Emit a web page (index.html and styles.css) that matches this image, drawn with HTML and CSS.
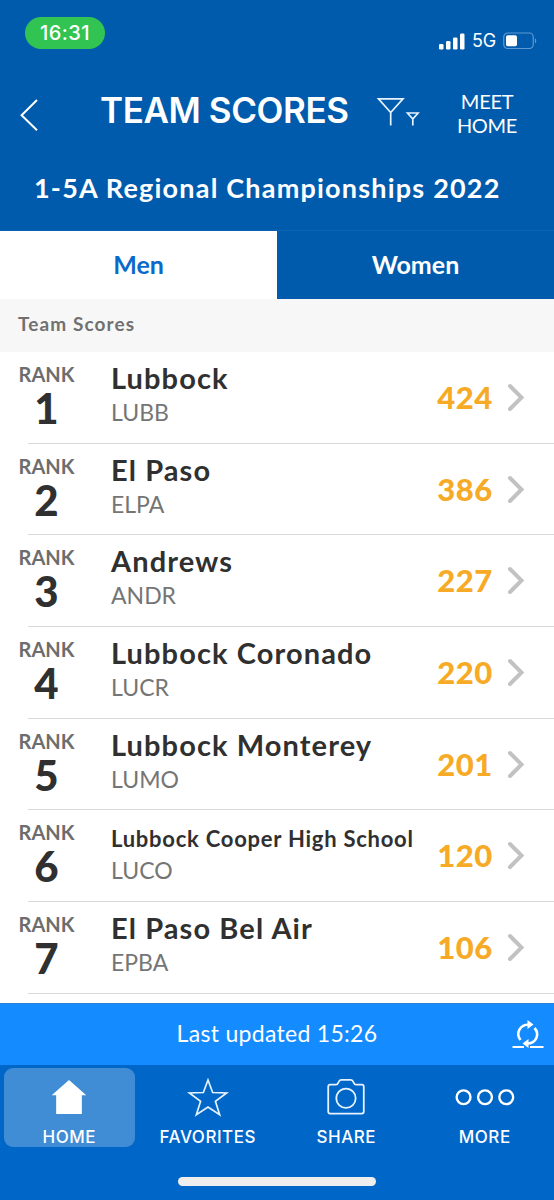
FILE: index.html
```
<!DOCTYPE html>
<html lang="en">
<head>
    <meta charset="UTF-8">
    <meta name="viewport" content="width=device-width, initial-scale=1.0">
    <title>Team Scores</title>
    <link rel="stylesheet" href="styles.css">
</head>
<body>
    <div class="app">
        <header class="header">
            <div class="status-bar">
                <span class="clock">16:31</span>
                <div class="status-icons">
                    <svg class="signal" width="26" height="17" viewBox="0 0 26 17" fill="#fff">
                        <rect x="0" y="11" width="4.5" height="5.5" rx="1.2"/>
                        <rect x="7" y="8" width="4.5" height="8.5" rx="1.2"/>
                        <rect x="14" y="4.5" width="4.5" height="12" rx="1.2"/>
                        <rect x="21" y="0.5" width="4.5" height="16" rx="1.2"/>
                    </svg>
                    <span class="network">5G</span>
                    <svg class="battery" width="35" height="18" viewBox="0 0 35 18">
                        <rect x="0.75" y="1" width="29.5" height="15.5" rx="4" fill="none" stroke="#5f9ad2" stroke-width="1.2"/>
                        <rect x="3" y="3.2" width="11" height="11" rx="1.8" fill="#fff"/>
                        <path d="M32 6.2c1.6.5 1.6 4.6 0 5.1z" fill="#5f9ad2"/>
                    </svg>
                </div>
            </div>
            <div class="title-bar">
                <a class="back" href="#" aria-label="Back">
                    <svg width="20" height="34" viewBox="0 0 20 34" fill="none" stroke="#fff" stroke-width="2">
                        <path d="M18 2L2.600 17.200l15.400 15"/>
                    </svg>
                </a>
                <h1>TEAM SCORES</h1>
                <svg class="filter" width="44" height="30" viewBox="0 0 44 30" fill="none" stroke="#e6f3ff" stroke-width="1.7">
                    <path d="M2.500 1.800h24.500L14.700 15.500zM14.700 15v13.500"/>
                    <path d="M31.500 16h10.500l-5.200 6zM36.800 21.500v7"/>
                </svg>
                <a class="meet-home" href="#">MEET<br>HOME</a>
            </div>
            <h2>1-5A Regional Championships 2022</h2>
        </header>

        <div class="tabs">
            <a class="tab active" href="#">Men</a>
            <a class="tab" href="#">Women</a>
        </div>
        <div class="section-title"><span>Team Scores</span></div>

        <ul class="teams">
            <li class="team">
                <div class="rank"><span>RANK</span><b>1</b></div>
                <div class="name"><h3>Lubbock</h3><p>LUBB</p></div>
                <div class="score">424</div>
                <svg class="chevron" viewBox="0 0 18 30"><path d="M3 3l11.500 11.500L3 26"/></svg>
            </li>
            <li class="team">
                <div class="rank"><span>RANK</span><b>2</b></div>
                <div class="name"><h3>El Paso</h3><p>ELPA</p></div>
                <div class="score">386</div>
                <svg class="chevron" viewBox="0 0 18 30"><path d="M3 3l11.500 11.500L3 26"/></svg>
            </li>
            <li class="team">
                <div class="rank"><span>RANK</span><b>3</b></div>
                <div class="name"><h3>Andrews</h3><p>ANDR</p></div>
                <div class="score">227</div>
                <svg class="chevron" viewBox="0 0 18 30"><path d="M3 3l11.500 11.500L3 26"/></svg>
            </li>
            <li class="team">
                <div class="rank"><span>RANK</span><b>4</b></div>
                <div class="name"><h3>Lubbock Coronado</h3><p>LUCR</p></div>
                <div class="score">220</div>
                <svg class="chevron" viewBox="0 0 18 30"><path d="M3 3l11.500 11.500L3 26"/></svg>
            </li>
            <li class="team">
                <div class="rank"><span>RANK</span><b>5</b></div>
                <div class="name"><h3>Lubbock Monterey</h3><p>LUMO</p></div>
                <div class="score">201</div>
                <svg class="chevron" viewBox="0 0 18 30"><path d="M3 3l11.500 11.500L3 26"/></svg>
            </li>
            <li class="team">
                <div class="rank"><span>RANK</span><b>6</b></div>
                <div class="name"><h3 class="long">Lubbock Cooper High School</h3><p>LUCO</p></div>
                <div class="score">120</div>
                <svg class="chevron" viewBox="0 0 18 30"><path d="M3 3l11.500 11.500L3 26"/></svg>
            </li>
            <li class="team">
                <div class="rank"><span>RANK</span><b>7</b></div>
                <div class="name"><h3>El Paso Bel Air</h3><p>EPBA</p></div>
                <div class="score">106</div>
                <svg class="chevron" viewBox="0 0 18 30"><path d="M3 3l11.500 11.500L3 26"/></svg>
            </li>
        </ul>

        <div class="updated">
            <span>Last updated 15:26</span>
            <svg class="refresh" width="32" height="30" viewBox="0 0 32 30" fill="none" stroke="#fff" stroke-width="2.6">
                <path d="M8.500 20C3.500 13.500 7.500 4.500 17 4.500"/>
                <path d="M22.500 8C28 14 24.500 23.500 15 23.500"/>
                <path d="M15.500 0l6 4.500-6 4.500zM16.500 19l-6 4.500 6 4.500z" fill="#fff" stroke="none"/>
                <path d="M.5 27H12M18 27h13.500" stroke-width="2"/>
            </svg>
        </div>

        <nav class="nav">
            <a class="nav-item current" href="#">
                <svg width="44" height="42" viewBox="0 0 44 42"><path d="M22 2L39.500 17.500H35V36.500H9V17.500H4.500z" fill="#fff"/></svg>
                <span>HOME</span>
            </a>
            <a class="nav-item" href="#">
                <svg width="44" height="42" viewBox="0 0 44 42" fill="none" stroke="#e6f3ff" stroke-width="1.7"><path d="M22 2L26.700 14.700 40.800 15.200 29.500 23.500 33.800 37.200 22 29.300 10.200 37.200 14.500 23.500 3.200 15.200 17.300 14.700z"/></svg>
                <span>FAVORITES</span>
            </a>
            <a class="nav-item" href="#">
                <svg width="44" height="42" viewBox="0 0 44 42" fill="none" stroke="#e6f3ff" stroke-width="1.8">
                    <path d="M6 6.800H12C14.500 6.800 14 2 17 2H27C30 2 29.500 6.800 32 6.800H38Q40 6.800 40 8.800V34Q40 36 38 36H6Q4 36 4 34V8.800Q4 6.800 6 6.800z"/>
                    <circle cx="22" cy="20.5" r="9.8"/>
                </svg>
                <span>SHARE</span>
            </a>
            <a class="nav-item" href="#">
                <svg width="62" height="42" viewBox="0 0 62 42" fill="none" stroke="#fff" stroke-width="2.4">
                    <circle cx="9.3" cy="19.5" r="7"/>
                    <circle cx="31" cy="19.5" r="7"/>
                    <circle cx="52.5" cy="19.5" r="7"/>
                </svg>
                <span>MORE</span>
            </a>
        </nav>
        <div class="home-indicator"></div>
    </div>
</body>
</html>
```
FILE: styles.css
```
* {
    box-sizing: border-box;
}
body {
    margin: 0;
    font-family: Lato, 'Open Sans', sans-serif;
    color: #303030;
    background-color: #fff;
}
h1, h2, h3, p, ul {
    margin: 0;
    padding: 0;
}
a {
    color: inherit;
    text-decoration: none;
}
svg {
    display: block;
}
.app {
    display: flex;
    flex-direction: column;
    width: 554px;
    height: 1200px;
    overflow: hidden;
    background-color: #0066c8;
}
.header {
    height: 230px;
    color: #fff;
    background-color: #005bad;
}
.status-bar {
    display: flex;
    justify-content: space-between;
    height: 80px;
    padding: 17px 16px 0 25px;
}
.clock {
    width: 80px;
    height: 32px;
    border-radius: 16px;
    background-color: #32c453;
    font: 500 20px/32px Inter, sans-serif;
    letter-spacing: 0.4px;
    text-align: center;
}
.status-icons {
    display: flex;
    align-items: center;
    height: 48px;
}
.signal {
    margin-right: 7px;
}
.network {
    width: 31px;
    font: 400 18px/24px Inter, sans-serif;
    letter-spacing: -0.3px;
}
.title-bar {
    display: flex;
    align-items: flex-start;
    height: 85px;
}
.back {
    width: 80px;
    padding: 18px 0 0 19px;
}
h1 {
    width: 269px;
    margin-left: 20px;
    padding-top: 8px;
    font: 600 35px/44px Inter, sans-serif;
    letter-spacing: -0.4px;
    white-space: nowrap;
}
.filter {
    margin-top: 17px;
    margin-left: 7px;
}
.meet-home {
    width: 80px;
    margin-left: 27px;
    padding-top: 9px;
    font-size: 20px;
    letter-spacing: -0.3px;
    line-height: 24px;
    text-align: center;
}
h2 {
    padding-left: 34px;
    font-size: 27px;
    font-weight: 700;
    letter-spacing: 1.2px;
    line-height: 46px;
    white-space: nowrap;
}
.tabs {
    display: flex;
    height: 69px;
    border-top: 1px solid #0a63b4;
    background-color: #005bad;
}
.tab {
    flex: 1;
    color: #fff;
    font-size: 25px;
    font-weight: 700;
    line-height: 66px;
    text-align: center;
}
.tab.active {
    color: #0b69cb;
    background-color: #fff;
}
.section-title {
    height: 53px;
    padding-left: 18px;
    background-color: #f7f7f7;
    color: #707070;
    font-size: 19px;
    font-weight: 700;
    letter-spacing: 1.1px;
    line-height: 49px;
}
.teams {
    height: 650.500px;
    background-color: #fff;
    list-style: none;
}
.team {
    display: flex;
    height: 91.700px;
    background: linear-gradient(#d9d9d9, #d9d9d9) 28px 100% / 100% 1px no-repeat;
}
.rank {
    display: flex;
    flex-direction: column;
    width: 93px;
    padding-top: 10px;
    text-align: center;
}
.rank span {
    color: #6d6d6d;
    font-size: 20px;
    font-weight: 700;
    line-height: 24px;
}
.rank b {
    font-size: 42px;
    font-weight: 900;
    line-height: 44px;
}
.name {
    width: 325px;
    padding: 8px 0 0 18px;
}
.name h3 {
    font-size: 29px;
    font-weight: 700;
    letter-spacing: 1.1px;
    line-height: 36px;
    white-space: nowrap;
}
.name .long {
    padding-top: 5px;
    font-size: 22px;
    letter-spacing: 0.75px;
    line-height: 31px;
}
.name p {
    color: #757575;
    font-size: 23px;
    line-height: 32px;
}
.score {
    width: 94px;
    color: #f6aa25;
    font-size: 31px;
    font-weight: 900;
    letter-spacing: 0.5px;
    line-height: 90px;
    text-align: center;
}
.chevron {
    width: 18px;
    height: 30px;
    margin: 31px 0 0 -5px;
    fill: none;
    stroke: #c2c2c2;
    stroke-width: 4;
    stroke-linecap: round;
}
.updated {
    position: relative;
    height: 62.500px;
    border-top: 1px solid #2a81d2;
    background-color: #148cff;
    color: #fff;
    font-size: 23px;
    letter-spacing: 0.3px;
    line-height: 58px;
    text-align: center;
}
.refresh {
    position: absolute;
    top: 16px;
    right: 10px;
}
.nav {
    display: flex;
    height: 83px;
    padding-top: 3px;
}
.nav-item {
    display: flex;
    flex-direction: column;
    align-items: center;
    width: 131.500px;
    height: 78.500px;
    margin: 0 3.500px;
    padding-top: 10px;
    border-radius: 9px;
    color: #fff;
    font: 500 17px/20px Inter, sans-serif;
    letter-spacing: 0.5px;
}
.nav-item span {
    padding-top: 7px;
}
.nav-item.current {
    background-color: #408dd5;
}
.home-indicator {
    width: 198px;
    height: 9px;
    margin: 29px auto 0;
    border-radius: 5px;
    background-color: #eee;
}
```
